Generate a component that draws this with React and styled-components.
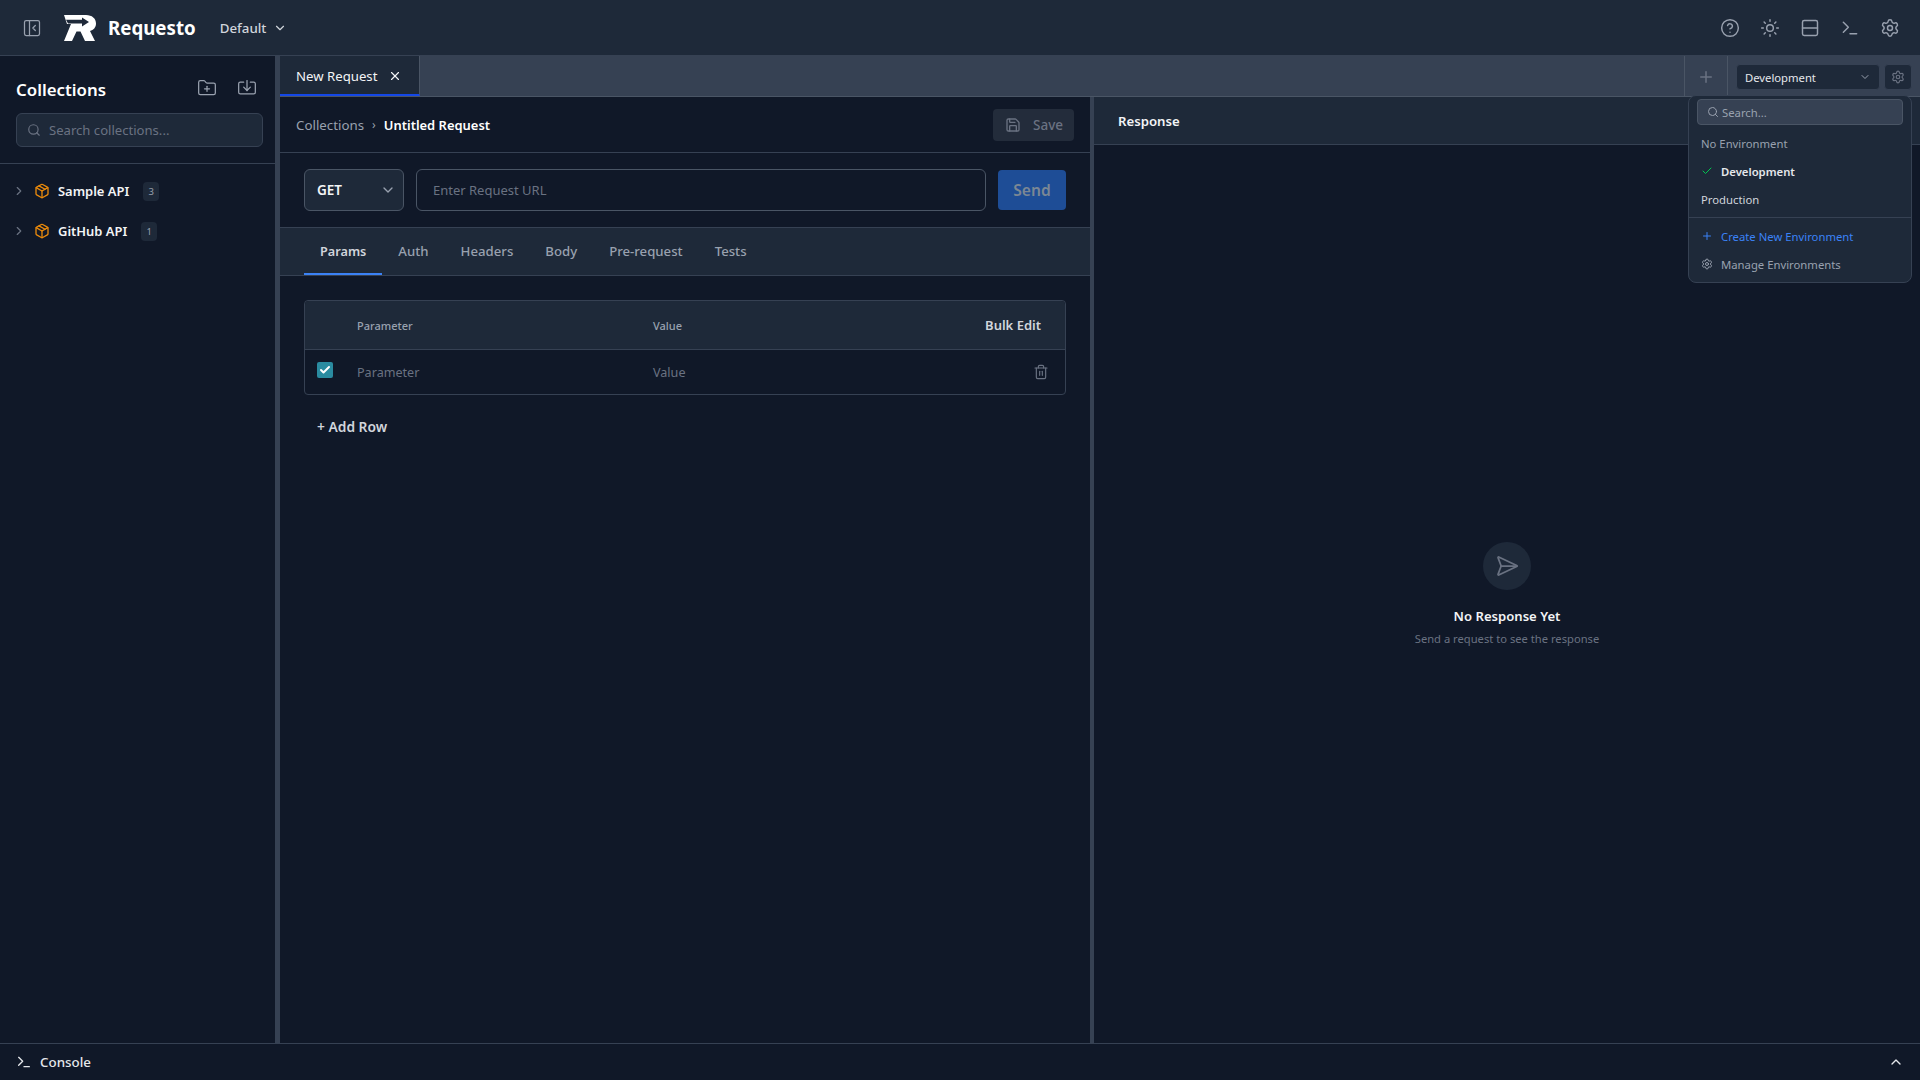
import React from "react";
import styled, { createGlobalStyle } from "styled-components";
import {
  Check,
  ChevronDown,
  ChevronRight,
  ChevronUp,
  CircleHelp,
  FolderPlus,
  Import,
  Package,
  PanelLeftClose,
  Plus,
  Rows2,
  Save,
  Search,
  SendHorizontal,
  Settings,
  Sun,
  Terminal,
  Trash2,
  X,
} from "lucide-react";

const GlobalStyle = createGlobalStyle`
  html, body, #root {
    margin: 0;
    height: 100%;
  }
  body {
    background: #101828;
    color: #e5e7eb;
    font-family: "Noto Sans", "Open Sans", sans-serif;
    overflow: hidden;
  }
  * {
    box-sizing: border-box;
  }
`;

const Shell = styled.div`
  display: flex;
  flex-direction: column;
  width: 1920px;
  height: 1080px;
  position: relative;
`;

const TopBar = styled.header`
  display: flex;
  align-items: center;
  height: 56px;
  flex: none;
  padding: 0 20px 0 22px;
  background: #1e2939;
  border-bottom: 1px solid #364153;
`;

const IconBtn = styled.span`
  display: inline-flex;
  align-items: center;
  justify-content: center;
  color: ${(p) => p.$color || "#99a1af"};
`;

const LogoBox = styled.span`
  display: inline-flex;
  margin-left: 22px;
`;

const Brand = styled.span`
  margin-left: 12px;
  font-size: 18.7px;
  font-weight: 700;
  color: #fff;
`;

const Workspace = styled.span`
  display: inline-flex;
  align-items: center;
  gap: 7px;
  margin-left: 24px;
  font-size: 13.3px;
  font-weight: 500;
  color: #d1d5dc;
`;

const TopActions = styled.div`
  display: flex;
  align-items: center;
  gap: 20px;
  margin-left: auto;
`;

const Body = styled.div`
  display: flex;
  flex: 1;
  min-height: 0;
`;

const Sidebar = styled.aside`
  width: 275px;
  flex: none;
  background: #101828;
`;

const SidebarHead = styled.div`
  height: 108px;
  padding: 16px 12px 0 16px;
  border-bottom: 1px solid #364153;
`;

const SidebarTitleRow = styled.div`
  display: flex;
  align-items: center;
  justify-content: space-between;
  height: 32px;
  padding-right: 6px;
`;

const SidebarTitle = styled.h2`
  margin: 0;
  padding-top: 2px;
  font-size: 16.85px;
  font-weight: 600;
  color: #fff;
`;

const SidebarActions = styled.div`
  display: flex;
  gap: 20px;
`;

const SearchBox = styled.div`
  display: flex;
  align-items: center;
  gap: 8px;
  height: 34px;
  margin-top: 9px;
  padding: 0 10px;
  background: #1e2939;
  border: 1px solid #364153;
  border-radius: 6px;
  font-size: 13.1px;
  color: #6a7282;
`;

const Tree = styled.div`
  padding-top: 7px;
`;

const TreeRow = styled.div`
  display: flex;
  align-items: center;
  height: 40px;
  padding-left: 12px;
  font-size: 12.95px;
  font-weight: 600;
  color: #f3f4f6;
`;

const TreeLabel = styled.span`
  margin-left: 8px;
`;

const PkgIcon = styled.span`
  display: inline-flex;
  margin-left: 8px;
  color: #ea8a0c;
`;

const CountBadge = styled.span`
  display: inline-flex;
  align-items: center;
  justify-content: center;
  min-width: 16px;
  height: 19px;
  margin-left: 14px;
  padding: 0 5px;
  border-radius: 4px;
  background: #1e2939;
  font-size: 9.5px;
  font-weight: 400;
  color: #99a1af;
`;

const Gutter = styled.div`
  width: ${(p) => p.$w}px;
  flex: none;
  background: #364153;
`;

const Main = styled.main`
  display: flex;
  flex-direction: column;
  flex: 1;
  min-width: 0;
`;

const TabStrip = styled.div`
  display: flex;
  height: 41px;
  flex: none;
  background: #364153;
  border-bottom: 1px solid #4a5565;
`;

const ReqTab = styled.div`
  display: flex;
  align-items: center;
  width: 140px;
  height: 40px;
  padding: 2px 0 0 16px;
  gap: 11px;
  background: #1e2939;
  border-right: 1px solid #4a5565;
  border-bottom: 2px solid #1447e6;
  font-size: 13.2px;
  color: #f3f4f6;
`;

const AddTab = styled.div`
  display: flex;
  align-items: center;
  justify-content: center;
  width: 44px;
  margin-left: auto;
  padding-top: 2px;
  border-left: 1px solid #4a5565;
  border-right: 1px solid #4a5565;
  color: #6a7282;
`;

const EnvArea = styled.div`
  display: flex;
  align-items: center;
  gap: 4px;
  width: 192px;
  padding: 2px 8px 0;
`;

const EnvSelect = styled.div`
  display: flex;
  align-items: center;
  justify-content: space-between;
  width: 144px;
  height: 26px;
  padding: 0 8px;
  background: #1e2939;
  border: 1px solid #364153;
  border-radius: 4px;
  font-size: 11.25px;
  color: #e5e7eb;
`;

const EnvGear = styled.div`
  display: flex;
  align-items: center;
  justify-content: center;
  width: 28px;
  height: 26px;
  background: #1e2939;
  border: 1px solid #364153;
  border-radius: 4px;
  color: #6a7282;
`;

const EnvMenu = styled.div`
  position: absolute;
  top: 95px;
  left: 1688px;
  width: 224px;
  height: 188px;
  padding: 3px 8px;
  background: #1e2939;
  border: 1px solid #364153;
  border-radius: 8px;
  z-index: 5;
`;

const EnvSearch = styled.div`
  display: flex;
  align-items: center;
  gap: 3px;
  height: 26px;
  padding: 0 9px;
  background: #364153;
  border: 1px solid #4a5565;
  border-radius: 4px;
  font-size: 11.3px;
  color: #99a1af;
`;

const EnvList = styled.div`
  margin: 4px 0;
`;

const EnvItem = styled.div`
  display: flex;
  align-items: center;
  height: 28px;
  padding-left: 4px;
  gap: 8px;
  font-size: 11.3px;
  font-weight: ${(p) => (p.$active ? 600 : 400)};
  color: ${(p) => p.$color || "#d1d5dc"};
`;

const MenuRule = styled.div`
  height: 1px;
  margin: 0 -8px 4px;
  background: #364153;
`;

const Panels = styled.div`
  display: flex;
  flex: 1;
  min-height: 0;
`;

const RequestPanel = styled.section`
  width: 810px;
  flex: none;
`;

const Crumbs = styled.div`
  display: flex;
  align-items: center;
  height: 56px;
  padding: 0 16px;
  border-bottom: 1px solid #364153;
  font-size: 13.3px;
  color: #99a1af;
`;

const CrumbSep = styled.span`
  margin: 0 8px;
  font-size: 12px;
`;

const CrumbNow = styled.span`
  font-size: 12.95px;
  font-weight: 600;
  color: #fff;
`;

const SaveBtn = styled.div`
  display: flex;
  align-items: center;
  gap: 12px;
  height: 32px;
  margin-left: auto;
  padding: 0 11px 0 12px;
  background: #232c3b;
  border-radius: 4px;
  font-size: 13.5px;
  font-weight: 500;
  color: #6a7282;
`;

const UrlRow = styled.div`
  display: flex;
  align-items: center;
  gap: 12px;
  height: 75px;
  padding: 0 24px;
  border-bottom: 1px solid #364153;
`;

const MethodSelect = styled.div`
  display: flex;
  align-items: center;
  justify-content: space-between;
  width: 100px;
  height: 42px;
  flex: none;
  padding: 0 7px 0 12px;
  background: #1e2939;
  border: 1px solid #4a5565;
  border-radius: 6px;
  font-size: 13.5px;
  font-weight: 600;
  color: #f3f4f6;
`;

const UrlInput = styled.div`
  display: flex;
  align-items: center;
  flex: 1;
  height: 42px;
  padding: 0 16px;
  border: 1px solid #4a5565;
  border-radius: 6px;
  font-size: 13px;
  color: #6a7282;
`;

const SendBtn = styled.div`
  display: flex;
  align-items: center;
  justify-content: center;
  width: 68px;
  height: 40px;
  flex: none;
  background: #1e4d96;
  border-radius: 4px;
  font-size: 15.6px;
  font-weight: 600;
  color: #7b8794;
`;

const TabsBar = styled.div`
  display: flex;
  height: 48px;
  padding: 0 24px;
  background: #1e2939;
  border-bottom: 1px solid #364153;
`;

const TabItem = styled.div`
  display: flex;
  align-items: center;
  padding: 0 16px;
  font-size: ${(p) => (p.$active ? "12.7px" : "13.2px")};
  font-weight: ${(p) => (p.$active ? 600 : 500)};
  color: ${(p) => (p.$active ? "#d1d5dc" : "#99a1af")};
  border-bottom: 2px solid ${(p) => (p.$active ? "#3b82f6" : "transparent")};
`;

const ParamsPane = styled.div`
  padding: 24px 24px 0;
`;

const ParamTable = styled.div`
  border: 1px solid #364153;
  border-radius: 4px;
`;

const tableCols = "52px 296px 1fr";

const ParamHead = styled.div`
  display: grid;
  grid-template-columns: ${tableCols};
  align-items: center;
  height: 49px;
  padding-right: 24px;
  background: #1e2939;
  border-bottom: 1px solid #364153;
  border-radius: 4px 4px 0 0;
  font-size: 11px;
  font-weight: 500;
  color: #99a1af;
`;

const ParamRow = styled.div`
  display: grid;
  grid-template-columns: ${tableCols};
  align-items: center;
  height: 44px;
  padding-right: 16px;
  font-size: 12.6px;
  color: #6a7282;
`;

const HeadEnd = styled.div`
  display: flex;
  align-items: center;
  justify-content: space-between;
`;

const BulkEdit = styled.span`
  font-size: 13px;
  font-weight: 600;
  color: #d1d5dc;
`;

const CheckBox = styled.span`
  display: flex;
  align-items: center;
  justify-content: center;
  width: 16px;
  height: 16px;
  margin: -4px 0 0 12px;
  background: #2a8ba0;
  border-radius: 2px;
  color: #fff;
`;

const AddRow = styled.div`
  margin-top: 22px;
  padding-left: 13px;
  font-size: 13.8px;
  font-weight: 600;
  color: #d1d5dc;
`;

const ResponsePanel = styled.section`
  display: flex;
  flex-direction: column;
  flex: 1;
  min-width: 0;
`;

const ResponseHead = styled.div`
  display: flex;
  align-items: center;
  height: 48px;
  flex: none;
  padding: 0 24px;
  background: #1e2939;
  border-bottom: 1px solid #364153;
  font-size: 13.2px;
  font-weight: 600;
  color: #f3f4f6;
`;

const EmptyState = styled.div`
  display: flex;
  flex-direction: column;
  align-items: center;
  justify-content: center;
  flex: 1;
`;

const EmptyCircle = styled.div`
  display: flex;
  align-items: center;
  justify-content: center;
  width: 48px;
  height: 48px;
  border-radius: 50%;
  background: #1e2939;
  color: #6a7282;
`;

const EmptyTitle = styled.div`
  margin-top: 17px;
  font-size: 13.1px;
  font-weight: 600;
  color: #f3f4f6;
`;

const EmptyText = styled.div`
  margin-top: 6px;
  font-size: 11.2px;
  color: #6a7282;
`;

const ConsoleBar = styled.footer`
  display: flex;
  align-items: center;
  height: 37px;
  flex: none;
  padding: 0 16px;
  border-top: 1px solid #364153;
  font-size: 13.35px;
  font-weight: 500;
  color: #e5e7eb;
`;

const ConsoleLabel = styled.span`
  margin-left: 8px;
`;

const ConsoleToggle = styled.span`
  display: inline-flex;
  margin-left: auto;
  color: #e5e7eb;
`;

const Logo = () => (
  <svg width="32" height="26" viewBox="0 0 32 26">
    <path
      fill="#fff"
      d="M0 0H22C28 0 32 3.5 32 8.5C32 12.5 29.5 15 26 16L31 26H21L16.5 16.5H12.5L8 26H0L7 9H3Z"
    />
    <path fill="#1e2939" d="M2 4.8H18V2.6L25 7L18 11.4V8.4H4Z" />
  </svg>
);

const App = () => {
  return (
    <Shell>
      <GlobalStyle />
      <TopBar>
        <IconBtn>
          <PanelLeftClose size={20} strokeWidth={1.5} />
        </IconBtn>
        <LogoBox>
          <Logo />
        </LogoBox>
        <Brand>Requesto</Brand>
        <Workspace>
          Default
          <ChevronDown size={14} />
        </Workspace>
        <TopActions>
          <IconBtn>
            <CircleHelp size={20} strokeWidth={1.75} />
          </IconBtn>
          <IconBtn>
            <Sun size={20} strokeWidth={1.75} />
          </IconBtn>
          <IconBtn>
            <Rows2 size={20} strokeWidth={1.75} />
          </IconBtn>
          <IconBtn>
            <Terminal size={20} strokeWidth={1.75} />
          </IconBtn>
          <IconBtn>
            <Settings size={20} strokeWidth={1.75} />
          </IconBtn>
        </TopActions>
      </TopBar>
      <Body>
        <Sidebar>
          <SidebarHead>
            <SidebarTitleRow>
              <SidebarTitle>Collections</SidebarTitle>
              <SidebarActions>
                <IconBtn>
                  <FolderPlus size={20} strokeWidth={1.5} />
                </IconBtn>
                <IconBtn>
                  <Import size={20} strokeWidth={1.5} />
                </IconBtn>
              </SidebarActions>
            </SidebarTitleRow>
            <SearchBox>
              <Search size={14} />
              Search collections...
            </SearchBox>
          </SidebarHead>
          <Tree>
            <TreeRow>
              <IconBtn $color="#6a7282">
                <ChevronRight size={14} />
              </IconBtn>
              <PkgIcon>
                <Package size={16} />
              </PkgIcon>
              <TreeLabel>Sample API</TreeLabel>
              <CountBadge>3</CountBadge>
            </TreeRow>
            <TreeRow>
              <IconBtn $color="#6a7282">
                <ChevronRight size={14} />
              </IconBtn>
              <PkgIcon>
                <Package size={16} />
              </PkgIcon>
              <TreeLabel>GitHub API</TreeLabel>
              <CountBadge>1</CountBadge>
            </TreeRow>
          </Tree>
        </Sidebar>
        <Gutter $w={5} />
        <Main>
          <TabStrip>
            <ReqTab>
              New Request
              <X size={14} />
            </ReqTab>
            <AddTab>
              <Plus size={18} />
            </AddTab>
            <EnvArea>
              <EnvSelect>
                Development
                <ChevronDown size={12} color="#99a1af" />
              </EnvSelect>
              <EnvGear>
                <Settings size={14} />
              </EnvGear>
            </EnvArea>
          </TabStrip>
          <Panels>
            <RequestPanel>
              <Crumbs>
                Collections
                <CrumbSep>›</CrumbSep>
                <CrumbNow>Untitled Request</CrumbNow>
                <SaveBtn>
                  <Save size={16} />
                  Save
                </SaveBtn>
              </Crumbs>
              <UrlRow>
                <MethodSelect>
                  GET
                  <ChevronDown size={16} color="#99a1af" />
                </MethodSelect>
                <UrlInput>Enter Request URL</UrlInput>
                <SendBtn>Send</SendBtn>
              </UrlRow>
              <TabsBar>
                <TabItem $active>Params</TabItem>
                <TabItem>Auth</TabItem>
                <TabItem>Headers</TabItem>
                <TabItem>Body</TabItem>
                <TabItem>Pre-request</TabItem>
                <TabItem>Tests</TabItem>
              </TabsBar>
              <ParamsPane>
                <ParamTable>
                  <ParamHead>
                    <span />
                    <span>Parameter</span>
                    <HeadEnd>
                      <span>Value</span>
                      <BulkEdit>Bulk Edit</BulkEdit>
                    </HeadEnd>
                  </ParamHead>
                  <ParamRow>
                    <CheckBox>
                      <Check size={12} strokeWidth={4} />
                    </CheckBox>
                    <span>Parameter</span>
                    <HeadEnd>
                      <span>Value</span>
                      <IconBtn $color="#6a7282">
                        <Trash2 size={16} strokeWidth={1.75} />
                      </IconBtn>
                    </HeadEnd>
                  </ParamRow>
                </ParamTable>
                <AddRow>+ Add Row</AddRow>
              </ParamsPane>
            </RequestPanel>
            <Gutter $w={4} />
            <ResponsePanel>
              <ResponseHead>Response</ResponseHead>
              <EmptyState>
                <EmptyCircle>
                  <SendHorizontal size={24} strokeWidth={1.75} />
                </EmptyCircle>
                <EmptyTitle>No Response Yet</EmptyTitle>
                <EmptyText>Send a request to see the response</EmptyText>
              </EmptyState>
            </ResponsePanel>
          </Panels>
        </Main>
      </Body>
      <ConsoleBar>
        <Terminal size={16} />
        <ConsoleLabel>Console</ConsoleLabel>
        <ConsoleToggle>
          <ChevronUp size={16} />
        </ConsoleToggle>
      </ConsoleBar>
      <EnvMenu>
        <EnvSearch>
          <Search size={12} />
          Search...
        </EnvSearch>
        <EnvList>
          <EnvItem $color="#99a1af">No Environment</EnvItem>
          <EnvItem $active $color="#e5e7eb">
            <Check size={12} color="#00c950" />
            Development
          </EnvItem>
          <EnvItem>Production</EnvItem>
        </EnvList>
        <MenuRule />
        <EnvItem $color="#3b82f6">
          <Plus size={12} />
          Create New Environment
        </EnvItem>
        <EnvItem $color="#99a1af">
          <Settings size={12} />
          Manage Environments
        </EnvItem>
      </EnvMenu>
    </Shell>
  );
};

export default App;
